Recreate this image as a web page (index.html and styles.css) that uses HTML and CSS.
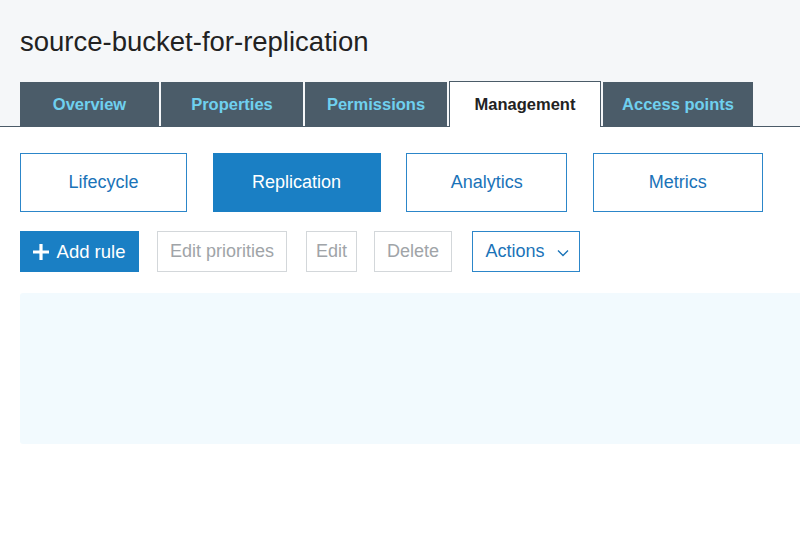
FILE: index.html
```html
<!DOCTYPE html>
<html lang="en">
<head>
  <meta charset="UTF-8">
  <meta name="viewport" content="width=device-width, initial-scale=1.0">
  <title>source-bucket-for-replication</title>
  <link rel="stylesheet" href="styles.css">
</head>
<body>
  <div class="bucket-header">
    <h1 class="bucket-name">source-bucket-for-replication</h1>
    <div class="bucket-tabs">
      <a class="tab tab-overview" href="#">Overview</a>
      <a class="tab tab-properties" href="#">Properties</a>
      <a class="tab tab-permissions" href="#">Permissions</a>
      <a class="tab tab-management active" href="#">Management</a>
      <a class="tab tab-access" href="#">Access points</a>
    </div>
  </div>

  <div class="management">
    <!-- Sous-onglets de la gestion -->
    <div class="sub-nav">
      <a class="sub-btn sub-lifecycle" href="#">Lifecycle</a>
      <a class="sub-btn sub-replication selected" href="#">Replication</a>
      <a class="sub-btn sub-analytics" href="#">Analytics</a>
      <a class="sub-btn sub-metrics" href="#">Metrics</a>
    </div>

    <div class="rule-actions">
      <button class="btn btn-primary btn-add">
        <svg class="plus" width="18" height="18" viewBox="0 0 18 18">
          <path d="M9 1v16M1 9h16" stroke="#fff" stroke-width="3.2"/>
        </svg>
        Add rule
      </button>
      <button class="btn btn-disabled btn-priorities">Edit priorities</button>
      <button class="btn btn-disabled btn-edit">Edit</button>
      <button class="btn btn-disabled btn-delete">Delete</button>
      <button class="btn btn-outline btn-actions">
        Actions
        <svg class="chevron" width="12" height="8" viewBox="0 0 12 8">
          <path d="M1 1.5l5 5 5-5" fill="none" stroke="#1a73b8" stroke-width="1.4"/>
        </svg>
      </button>
    </div>

    <div class="rules-panel"></div>
  </div>
</body>
</html>
```

FILE: styles.css
```css
body {
  margin: 0;
  font-family: "Liberation Sans", Arial, sans-serif;
  background-color: #ffffff;
}
.bucket-header {
  background-color: #f5f7f9;
  border-bottom: 1px solid #4b5b68;
  padding-top: 26px;
}
.bucket-name {
  margin: 0 0 24px 20px;
  font-size: 27.5px;
  line-height: 32px;
  font-weight: normal;
  color: #222;
}
.bucket-tabs {
  display: flex;
  gap: 2px;
  margin-left: 20px;
  margin-bottom: -1px;
}
.tab {
  display: flex;
  justify-content: center;
  align-items: center;
  height: 45px;
  background-color: #4b5c69;
  color: #6fd0ef;
  font-size: 16.5px;
  font-weight: bold;
  text-decoration: none;
}
.tab-overview { width: 139px; }
.tab-properties { width: 142px; }
.tab-permissions { width: 142px; }
.tab-management { width: 152px; }
.tab-access { width: 150px; }
.tab.active {
  background-color: #ffffff;
  color: #222;
  border: 1px solid #4b5b68;
  border-bottom: none;
  box-sizing: border-box;
  height: 46px;
  margin-top: -1px;
}
.management {
  padding-left: 20px;
}
.sub-nav {
  display: flex;
  gap: 25.6px;
  margin-top: 26px;
}
.sub-btn {
  display: flex;
  justify-content: center;
  align-items: center;
  box-sizing: border-box;
  height: 59px;
  border: 1.5px solid #2c86c9;
  color: #1a73b8;
  font-size: 18px;
  text-decoration: none;
}
.sub-lifecycle { width: 167px; }
.sub-replication { width: 168px; }
.sub-analytics { width: 161px; }
.sub-metrics { width: 170px; }
.sub-btn.selected {
  background-color: #1a7fc4;
  border-color: #1a7fc4;
  color: #ffffff;
}
.rule-actions {
  display: flex;
  align-items: center;
  margin-top: 19px;
}
.btn {
  display: flex;
  justify-content: center;
  align-items: center;
  box-sizing: border-box;
  height: 41px;
  padding: 0;
  font-family: "Liberation Sans", Arial, sans-serif;
  font-size: 18px;
  background-color: #ffffff;
}
.btn-primary {
  background-color: #1a7fc4;
  border: 1px solid #1a7fc4;
  color: #ffffff;
  gap: 7px;
  font-size: 18.5px;
}
.btn-disabled {
  border: 1.5px solid #d3d7da;
  color: #a0a4a8;
}
.btn-outline {
  border: 1.5px solid #2c86c9;
  color: #1a73b8;
  gap: 12px;
}
.btn-add { width: 119px; }
.btn-priorities { width: 130px; margin-left: 18px; }
.btn-edit { width: 51px; margin-left: 19px; }
.btn-delete { width: 78px; margin-left: 17px; }
.btn-actions { width: 108px; margin-left: 20px; padding-left: 2px; }
.plus { margin-left: -2px; }
.chevron { margin-top: 2px; }
/* Zone vide de la liste des règles */
.rules-panel {
  margin-top: 21px;
  height: 151px;
  background-color: #f2fafe;
  border-radius: 3px 0 0 3px;
}
```
